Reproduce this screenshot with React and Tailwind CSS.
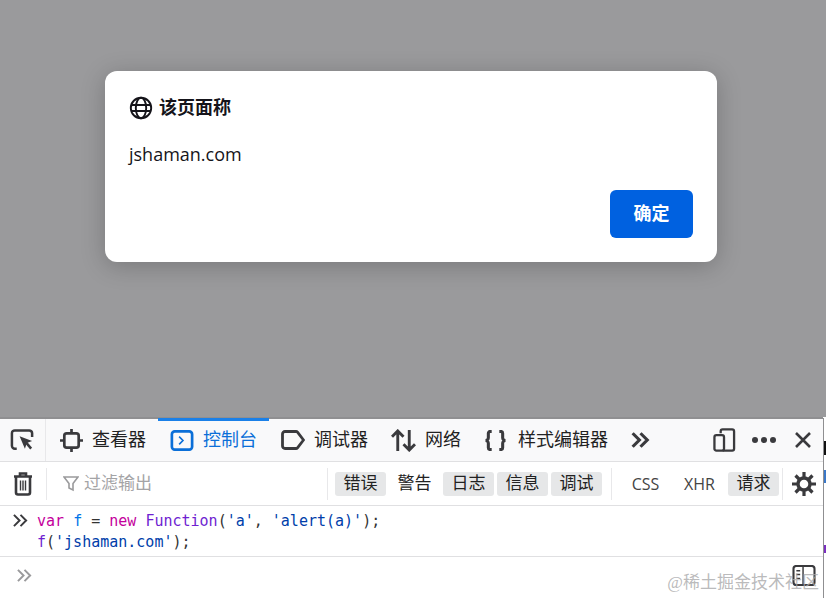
import React from "react";

const Cjk = "font-['Liberation_Sans','Noto_Sans_CJK_SC',sans-serif]";

function Chevrons({ className = "", color = "#333", w = 2.2 }) {
  return (
    <svg viewBox="0 0 18 16" className={className} fill="none" stroke={color} strokeWidth={w}>
      <path d="M2 2l6 6-6 6M9 2l6 6-6 6" />
    </svg>
  );
}

function Tab({ icon, label, active, className = "" }) {
  return (
    <div className={`flex items-center h-full relative ${className}`}>
      {active && <div className="absolute left-0 right-0 top-[-1px] h-[3px] bg-[#1a80e8]" />}
      {icon}
      <span className={`text-[18px] leading-none ${active ? "text-[#0b6fd8]" : "text-[#222]"}`}>{label}</span>
    </div>
  );
}

function Filter({ label, on, className = "" }) {
  return (
    <span className={`h-6 w-[51px] flex items-center justify-center rounded-[3px] text-[17px] leading-none text-[#222] ${on ? "bg-[#e6e7e8]" : ""} ${className}`}>
      {label}
    </span>
  );
}

export default function App() {
  return (
    <div className={`relative w-[826px] h-[598px] overflow-hidden bg-white flex flex-col ${Cjk}`}>
      <div className="h-[417px] shrink-0 bg-[#9a9a9c] flex justify-center pr-[4px] pt-[71px] items-start">
        <div className="w-[612px] h-[191px] bg-white rounded-[12px] shadow-[0_4px_24px_rgba(0,0,0,0.22)] px-6 pt-[25px] flex flex-col">
          <div className="flex items-center gap-[6px] h-6 text-[#15141a]">
            <svg viewBox="0 0 24 24" className="w-6 h-6" fill="none" stroke="#15141a" strokeWidth="1.9">
              <circle cx="12" cy="12" r="10.2" />
              <ellipse cx="12" cy="12" rx="5.2" ry="10.2" />
              <path d="M2 9h20M2 15h20" />
            </svg>
            <span className="text-[18px] font-bold leading-none">该页面称</span>
          </div>
          <div className="mt-[22px] text-[18px] leading-[24px] text-[#15141a] font-['Open_Sans',sans-serif]">jshaman.com</div>
          <div className="mt-[24px] flex justify-end">
            <button className="w-[83px] h-12 rounded-[6px] bg-[#0061e0] text-white text-[18px] font-bold">确定</button>
          </div>
        </div>
      </div>

      <div className="flex-1 flex flex-col border-t-2 border-[#8f8f91] w-[823px]">
        <div className="h-[42px] bg-[#f9f9fa] border-b border-[#e0e0e2] box-content flex items-center">
          <div className="w-[46px] h-full flex items-center justify-center border-r border-[#e8e8ea]">
            <svg viewBox="0 0 26 24" className="w-[25px] h-[24px]" fill="none" stroke="#3a3a3d" strokeWidth="2.6">
              <path d="M7 21H5a3 3 0 0 1-3-3V5a3 3 0 0 1 3-3h15a3 3 0 0 1 3 3v4" />
              <path d="M10 8l13 5-5.5 2-2 6z" fill="#3a3a3d" stroke="none" />
              <path d="M17 15l5 6" />
            </svg>
          </div>
          <Tab
            className="ml-[14px]"
            label="查看器"
            icon={
              <svg viewBox="0 0 24 24" className="w-[23px] h-[23px] mr-[9px]" fill="none" stroke="#3a3a3d" strokeWidth="2.8">
                <rect x="4.5" y="4.5" width="15" height="15" rx="2.5" />
                <path d="M12 0v4.5M12 19.5V24M0 12h4.5M19.5 12H24" />
              </svg>
            }
          />
          <Tab
            active
            className="ml-[12px] w-[111px] pl-[12px]"
            label="控制台"
            icon={
              <svg viewBox="0 0 24 22" className="w-[24px] h-[21px] mr-[9px]" fill="none" stroke="#0b6fd8" strokeWidth="2.8">
                <rect x="1.4" y="1.4" width="21.2" height="19.2" rx="3" />
                <path d="M9 7l4 4-4 4" strokeWidth="1.7" />
              </svg>
            }
          />
          <Tab
            className="ml-[12px]"
            label="调试器"
            icon={
              <svg viewBox="0 0 24 20" className="w-[24px] h-[20px] mr-[9px]" fill="none" stroke="#3a3a3d" strokeWidth="2.8">
                <path d="M4 1.5h11a2 2 0 0 1 1.5.7l6 7.8-6 7.8a2 2 0 0 1-1.5.7H4a2.5 2.5 0 0 1-2.5-2.5V4A2.5 2.5 0 0 1 4 1.5z" />
              </svg>
            }
          />
          <Tab
            className="ml-[23px]"
            label="网络"
            icon={
              <svg viewBox="0 0 26 24" className="w-[25px] h-[23px] mr-[9px]" fill="none" stroke="#3a3a3d" strokeWidth="3">
                <path d="M7 23V2M1 8l6-6 6 6M19 1v21M13 16l6 6 6-6" />
              </svg>
            }
          />
          <Tab
            className="ml-[23px]"
            label="样式编辑器"
            icon={
              <svg viewBox="0 0 24 22" className="w-[23px] h-[21px] mr-[11px]" fill="none" stroke="#3a3a3d" strokeWidth="3.2">
                <path d="M8 1.5H6.5a2 2 0 0 0-2 2V8a3 3 0 0 1-3 3 3 3 0 0 1 3 3v4.5a2 2 0 0 0 2 2H8" />
                <path d="M16 1.5h1.5a2 2 0 0 1 2 2V8a3 3 0 0 0 3 3 3 3 0 0 0-3 3v4.5a2 2 0 0 1-2 2H16" />
              </svg>
            }
          />
          <Chevrons className="w-[21px] h-[18px] ml-[22px]" color="#3a3a3d" w={2.8} />
          <svg viewBox="0 0 24 24" className="w-[23px] h-[24px] ml-[62px]" fill="none" stroke="#3a3a3d" strokeWidth="2.4">
            <path d="M8 5V3a2 2 0 0 1 2-2h10a2 2 0 0 1 2 2v18a2 2 0 0 1-2 2H10" />
            <rect x="1.5" y="7" width="10" height="16" rx="2" />
          </svg>
          <div className="flex gap-[3px] ml-[16px]">
            <i className="w-[6px] h-[6px] rounded-full bg-[#3a3a3d]" />
            <i className="w-[6px] h-[6px] rounded-full bg-[#3a3a3d]" />
            <i className="w-[6px] h-[6px] rounded-full bg-[#3a3a3d]" />
          </div>
          <svg viewBox="0 0 18 18" className="w-[18px] h-[18px] ml-[18px]" fill="none" stroke="#3a3a3d" strokeWidth="2.6">
            <path d="M2 2l14 14M16 2L2 16" />
          </svg>
        </div>

        <div className="h-[43px] box-content border-b border-[#e0e0e2] bg-white flex items-center">
          <div className="w-[47px] h-[32px] flex items-center justify-center border-r border-[#e8e8ea]">
            <svg viewBox="0 0 20 24" className="w-[20px] h-[25px]" fill="none" stroke="#3a3a3d" strokeWidth="2.6">
              <path d="M1 5h18M7 5V2h6v3M3 5v16a2 2 0 0 0 2 2h10a2 2 0 0 0 2-2V5" />
              <path d="M7.5 9v10M10 9v10M12.5 9v10" strokeWidth="1.4" />
            </svg>
          </div>
          <svg viewBox="0 0 16 16" className="w-[16px] h-[17px] ml-[16px]" fill="none" stroke="#9a9a9c" strokeWidth="1.6">
            <path d="M1 1.5h14L10 8v6.5l-4-2V8z" />
          </svg>
          <span className="ml-[5px] text-[17px] leading-none text-[#a4a4a6] w-[227px]">过滤输出</span>
          <div className="w-px h-[32px] bg-[#e8e8ea] ml-[16px]" />
          <Filter on label="错误" className="ml-[7px]" />
          <Filter label="警告" className="ml-[3px]" />
          <Filter on label="日志" className="ml-[3px]" />
          <Filter on label="信息" className="ml-[3px]" />
          <Filter on label="调试" className="ml-[3px]" />
          <div className="w-px h-[32px] bg-[#e8e8ea] ml-[9px]" />
          <Filter label="CSS" className="ml-[8px] font-['Open_Sans',sans-serif] !text-[16px] !text-[#444]" />
          <Filter label="XHR" className="ml-[3px] font-['Open_Sans',sans-serif] !text-[16px] !text-[#444]" />
          <Filter on label="请求" className="ml-[3px]" />
          <div className="w-px h-[32px] bg-[#e8e8ea] ml-[3px]" />
          <svg viewBox="0 0 24 24" className="w-[24px] h-[24px] ml-[9px]" fill="none" stroke="#3a3a3d">
            <circle cx="12" cy="12" r="6" strokeWidth="3.4" />
            <path d="M12 0v6M12 18v6M0 12h6M18 12h6M3.5 3.5l4 4M16.5 16.5l4 4M3.5 20.5l4-4M16.5 7.5l4-4" strokeWidth="3.2" />
          </svg>
        </div>

        <div className="h-[50px] border-b border-[#e0e0e2] flex box-content">
          <Chevrons className="w-[17px] h-[15px] ml-[12px] mt-[7px]" color="#3a3a3d" w={2.1} />
          <pre className="ml-[8px] mt-[5px] font-['DejaVu_Sans_Mono',monospace] text-[15px] leading-[21px] text-[#333]">
            <span className="text-[#c4009c]">var</span> <span className="text-[#0074e8]">f</span> = <span className="text-[#c4009c]">new</span> <span className="text-[#6f1fd1]">Function</span>(<span className="text-[#003eaa]">'a'</span>, <span className="text-[#003eaa]">'alert(a)'</span>);{"\n"}
            <span className="text-[#6f1fd1]">f</span>(<span className="text-[#003eaa]">'jshaman.com'</span>);
          </pre>
        </div>

        <div className="flex-1 flex items-start justify-between pt-[11px] relative">
          <Chevrons className="w-[17px] h-[15px] ml-[16px]" color="#9a9a9c" w={2.1} />
          <svg viewBox="0 0 24 22" className="w-[24px] h-[21px] mr-[7px] mt-[-3px]" fill="none" stroke="#3a3a3d" strokeWidth="2.2">
            <rect x="1" y="1" width="22" height="20" rx="3" />
            <path d="M11 1v20M4 6h4M4 10h4M4 14h4" strokeWidth="1.5" />
          </svg>
          <span className="absolute right-[4px] top-[17px] text-[17px] leading-none text-[#a8a8aa]/80 font-['Liberation_Serif','Noto_Sans_CJK_SC',serif]">@稀土掘金技术社区</span>
        </div>
      </div>
      <div className="absolute top-[418px] bottom-0 left-[823px] w-px bg-[#8f8f91]" />
      <div className="absolute top-[418px] bottom-0 left-[824px] w-[2px] bg-white" />
      <div className="absolute top-[441px] h-[14px] left-[824px] w-[2px] bg-[#111]" />
      <div className="absolute top-[470px] h-[13px] left-[824px] w-[2px] bg-[#3a78c8]" />
      <div className="absolute top-[545px] h-[8px] left-[824px] w-[2px] bg-[#7a2fc0]" />
    </div>
  );
}
